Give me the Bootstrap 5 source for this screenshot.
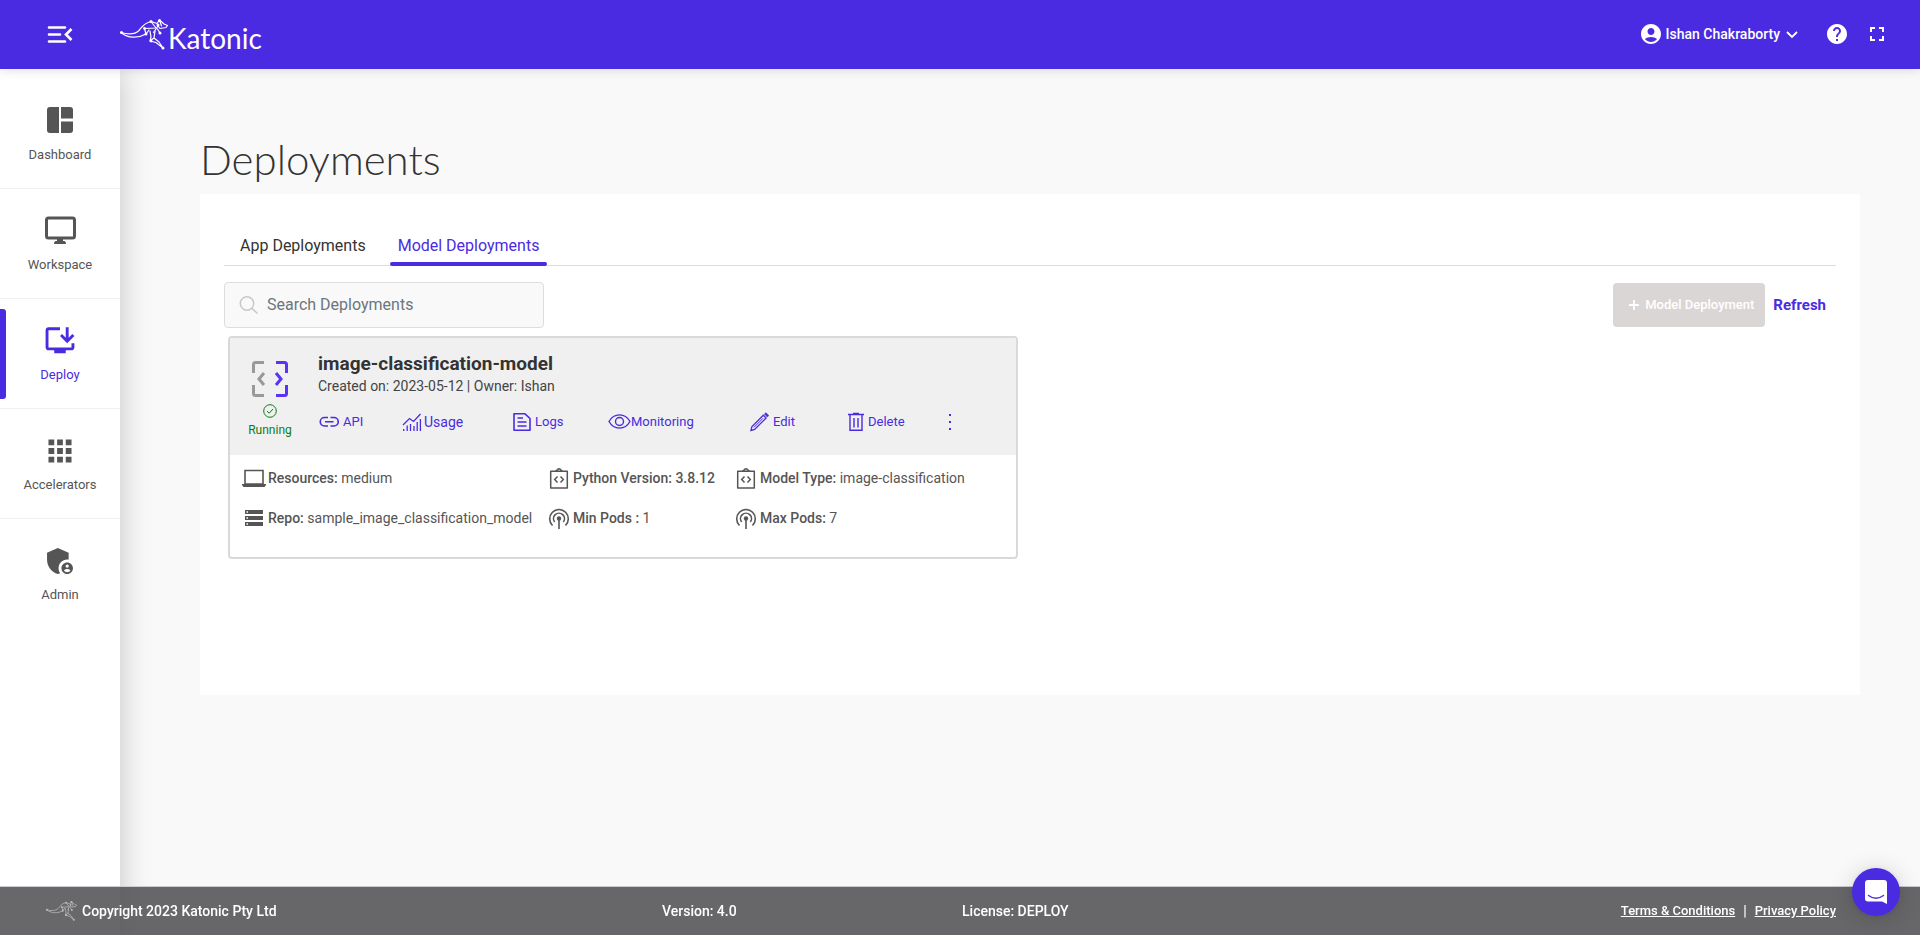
<!DOCTYPE html>
<html lang="en">
<head>
<meta charset="utf-8">
<meta name="viewport" content="width=device-width, initial-scale=1">
<title>Katonic - Deployments</title>
<link href="https://cdn.jsdelivr.net/npm/bootstrap@5.3.0/dist/css/bootstrap.min.css" rel="stylesheet">
<style>
:root { --brand: #4a2be2; --ink: #333; --soft: #555; }
body { font-family: Roboto, "Liberation Sans", sans-serif; font-size: 14px; line-height: 20px; color: var(--ink); background: #f9f9f9; }
svg { flex: none; display: block; }
button { font-family: inherit; }

.topbar { height: 69px; padding: 0 31px 2px 44px; background: var(--brand); box-shadow: 0 0 12px rgba(0,0,0,.15); z-index: 1020; }
.plain-btn { background: none; border: 0; padding: 0; color: inherit; }
.brand-link { margin-left: 44px; }
.wordmark { font-family: Lato, sans-serif; font-size: 28px; fill: #fff; }
.user-btn { font-size: 14px; font-weight: 500; gap: 3px; margin-right: 24px; }

.sidebar { width: 120px; background: #fff; box-shadow: 0 0 30px rgba(0,0,0,.22); padding-top: 10px; z-index: 1010; }
.side-link { height: 110px; padding-top: 24px; gap: 6px; font-size: 13px; color: var(--soft); border-bottom: 1px solid #f0f0f0; position: relative; }
.side-link:last-child { border-bottom: 0; }
.side-link.active { color: var(--brand); }
.side-link.active::before { content: ""; position: absolute; left: 0; top: 10px; bottom: 9px; width: 6px; border-radius: 0 3px 3px 0; background: var(--brand); }

.content-area { padding: 65px 60px 80px 80px; }
.page-title { font-family: Lato, sans-serif; font-weight: 300; font-size: 42px; line-height: 50px; margin: 0 0 10px; color: #333; }
.panel { background: #fff; padding: 36px 24px 24px; min-height: 501px; }
.tabs { border-bottom: 1px solid #ddd; gap: 16px; padding-left: 8px; height: 36px; }
.tabs .nav-link { position: relative; padding: 4px 8px; height: 36px; font-size: 16px; line-height: 24px; color: var(--ink); }
.tabs .nav-link.active { color: var(--brand); }
.tabs .nav-link.active::after { content: ""; position: absolute; left: 0; right: 0; bottom: 0; height: 4px; border-radius: 2px; background: var(--brand); }

.toolbar { margin-top: 16px; padding-right: 10px; }
.search-box { width: 320px; height: 46px; background: #f9f9f9; border: 1px solid #ddd; border-radius: 4px; padding: 0 14px; gap: 8px; }
.search-box input { background: none; border: 0; outline: 0; padding: 0; width: 100%; font-size: 16px; color: var(--ink); }
.search-box input::placeholder { color: #6c757d; opacity: 1; }
.add-btn { height: 44px; padding: 0 11px 0 15px; gap: 5px; font-size: 13px; font-weight: 500; color: #fff; background: #dad6d5; border: 0; border-radius: 4px; }
.refresh-btn { font-size: 15px; font-weight: 700; color: var(--brand); }

.model-col { padding: 8px 12px 0 4px; }
.model-card { border: 2px solid #d9d9d9; border-radius: 4px; background: #fff; }
.model-head { background: #f0f0f0; height: 117px; padding-top: 16px; }
.model-state { width: 80px; padding-top: 7px; gap: 7px; color: #0b7d17; font-size: 12px; line-height: 10px; }
.model-name { font-size: 19px; font-weight: 700; line-height: 20px; margin: 0 0 2px; }
.model-meta { font-size: 14px; line-height: 20px; color: #444; }
.actions { display: grid; grid-template-columns: 83fr 111fr 95fr 142fr 98fr 100fr 68fr; margin-top: 16px; padding-left: 1px; }
.actions a { color: var(--brand); font-size: 13px; height: 20px; }
.actions a.usage-link { font-size: 14px; gap: 2px; }
.facts { display: grid; grid-template-columns: 306fr 187fr 279fr; row-gap: 20px; padding: 13px 2px 29px 12px; color: var(--soft); }
.facts > div { height: 20px; gap: 2px; white-space: nowrap; }
.facts b { font-weight: 500; }
.facts svg { width: 24px; }
.facts .narrow { width: 22px; margin-right: 1px; }

.footer-bar { height: 49px; padding: 0 84px 0 45px; background: rgba(77,77,80,.85); border-top: 1px solid #ccc; background-clip: padding-box; color: #fff; font-weight: 500; display: grid; grid-template-columns: 617fr 300fr 874fr; align-items: center; }
.footer-bar a { color: #fff; font-size: 13px; }
.chat-btn { position: fixed; right: 20px; bottom: 19px; width: 48px; height: 48px; border: 0; border-radius: 50%; background: var(--brand); box-shadow: 0 2px 24px rgba(0,0,0,.16), 0 1px 6px rgba(0,0,0,.08); z-index: 1040; }
</style>
</head>
<body class="min-vh-100 d-flex flex-column">

<svg width="0" height="0" class="position-absolute" aria-hidden="true">
  <defs>
    <symbol id="kangaroo" viewBox="0 0 48 31">
      <g fill="none" stroke="currentColor" stroke-width="1.200" stroke-linejoin="round" stroke-linecap="round">
        <path d="M1 13.500C8 15.500 15 15.500 19 11.500C22 8 24 4 31 2.500L37 4.500L39.500 1L44 5L47.500 6.500L46 8.500L40 9.500L38 7L36 10L33.500 13.500"/>
        <path d="M1 13.500C8 19.500 18 19.500 26 15L24.500 9.500L36 9L31 2.500M26 15L29 11M39.500 1L41.500 7M37.500 10L40 14"/>
        <path d="M30 12L31 18L30 22L36 23.500L43 29M35 12L34 19L39 23L43 29M30 22L34 19"/>
      </g>
      <g fill="currentColor"><circle cx="1.500" cy="13.500" r="1.500"/><circle cx="31" cy="2.500" r="1.500"/><circle cx="39.500" cy="1.500" r="1.500"/><circle cx="24.500" cy="9.500" r="1.400"/><circle cx="26" cy="15" r="1.500"/><circle cx="38" cy="6" r="1.500"/><circle cx="40" cy="14" r="1.500"/><circle cx="43" cy="29" r="1.500"/><circle cx="31" cy="22" r="1.400"/></g>
    </symbol>
    <symbol id="clip-code" viewBox="0 0 22 24">
      <g fill="none" stroke="currentColor" stroke-width="1.500"><path d="M2.700 5.200H19.300V22H2.700Z" stroke-linejoin="round"/><path d="M8 5C8 4 9 4 9.500 4C9.500 2.300 12.500 2.300 12.500 4C13 4 14 4 14 5M9.500 10.500L6.700 13.500L9.500 16.500M12.500 10.500L15.300 13.500L12.500 16.500"/></g>
    </symbol>
    <symbol id="pod" viewBox="0 0 22 24">
      <g fill="none" stroke="currentColor" stroke-width="1.600"><path d="M4.500 19.500A9.300 9.300 0 1 1 17.500 19.500M6.600 16A5.500 5.500 0 1 1 15.400 16M11 13V23"/></g><circle cx="11" cy="12.500" r="2.200" fill="currentColor"/>
    </symbol>
  </defs>
</svg>

<header class="topbar sticky-top d-flex align-items-center text-white">
  <button class="plain-btn" type="button" aria-label="Collapse menu">
    <svg width="32" height="32" viewBox="0 0 32 32" fill="none" stroke="currentColor" stroke-width="2.600" stroke-linecap="round"><path d="M5 9.500H21M5 16.500H16M5 23.500H21"/><path d="M27.500 11L22 16.500L27.500 22" stroke-linecap="butt"/></svg>
  </button>
  <a class="brand-link" href="#" aria-label="Katonic home">
    <svg width="150" height="48" viewBox="0 0 150 48"><use href="#kangaroo" x="0" y="9" width="48" height="31" color="#fff"/><text class="wordmark" x="48" y="39">Katonic</text><circle cx="71" cy="32" r="1" fill="#fff"/></svg>
  </a>
  <div class="ms-auto d-flex align-items-center">
    <button class="plain-btn user-btn d-flex align-items-center" type="button">
      <svg width="24" height="24" viewBox="0 0 24 24" fill="currentColor"><path d="M12 2C6.480 2 2 6.480 2 12s4.480 10 10 10 10-4.480 10-10S17.520 2 12 2zm0 4c1.930 0 3.500 1.570 3.500 3.500S13.930 13 12 13s-3.500-1.570-3.500-3.500S10.070 6 12 6zm0 14c-2.030 0-4.430-.82-6.140-2.880C7.550 15.800 9.680 15 12 15s4.450.8 6.140 2.120C16.430 19.180 14.030 20 12 20z"/></svg>
      <span>Ishan Chakraborty</span>
      <svg width="18" height="18" viewBox="0 0 18 18" fill="none" stroke="currentColor" stroke-width="1.800"><path d="M4 7L9 12L14 7"/></svg>
    </button>
    <button class="plain-btn me-3" type="button" aria-label="Help">
      <svg width="24" height="24" viewBox="0 0 24 24" fill="currentColor"><path d="M12 2C6.480 2 2 6.480 2 12s4.480 10 10 10 10-4.480 10-10S17.520 2 12 2zm1 17h-2v-2h2v2zm2.070-7.750l-.9.920C13.450 12.900 13 13.500 13 15h-2v-.5c0-1.100.45-2.100 1.170-2.830l1.240-1.260c.37-.36.590-.86.590-1.410 0-1.100-.9-2-2-2s-2 .9-2 2H8c0-2.210 1.790-4 4-4s4 1.790 4 4c0 .880-.36 1.680-.93 2.250z"/></svg>
    </button>
    <button class="plain-btn" type="button" aria-label="Full screen">
      <svg width="24" height="24" viewBox="0 0 24 24" fill="currentColor"><path d="M7 14H5v5h5v-2H7v-3zm-2-4h2V7h3V5H5v5zm12 7h-3v2h5v-5h-2v3zM14 5v2h3v3h2V5h-5z"/></svg>
    </button>
  </div>
</header>

<div class="d-flex flex-grow-1">
  <nav class="sidebar flex-shrink-0" aria-label="Main">
    <a class="side-link d-flex flex-column align-items-center text-decoration-none" href="#">
      <svg width="36" height="36" viewBox="0 0 36 36" fill="currentColor"><path d="M8 4H17V30H8A3 3 0 0 1 5 27V7A3 3 0 0 1 8 4ZM19 4H28A3 3 0 0 1 31 7V15.500H19ZM19 18.500H31V27A3 3 0 0 1 28 30H19Z"/></svg>
      <span>Dashboard</span></a>
    <a class="side-link d-flex flex-column align-items-center text-decoration-none" href="#">
      <svg width="36" height="36" viewBox="0 0 36 36"><rect x="4.500" y="5" width="28" height="20" rx="2" fill="none" stroke="currentColor" stroke-width="3"/><path d="M15 25H21V28H22.500Q24 28.500 24 31H12Q12 28.500 13.500 28H15Z" fill="currentColor"/></svg>
      <span>Workspace</span></a>
    <a class="side-link active d-flex flex-column align-items-center text-decoration-none" href="#" aria-current="page">
      <svg width="36" height="36" viewBox="0 0 25 25" fill="currentColor"><path d="M20.500 17H4.500V5h8V3h-8c-1.100 0-2 .9-2 2v12c0 1.100.9 2 2 2h4v2h8v-2h4c1.100 0 2-.9 2-2v-3h-2zM17.500 14l5-5-1.410-1.410L18.500 10.170V3h-2v7.170l-2.590-2.580L12.500 9z"/></svg>
      <span>Deploy</span></a>
    <a class="side-link d-flex flex-column align-items-center text-decoration-none" href="#">
      <svg width="36" height="36" viewBox="0 0 25 25" fill="currentColor"><path d="M4.500 4.500h4v4h-4zM10.500 4.500h4v4h-4zM16.500 4.500h4v4h-4zM4.500 10.500h4v4h-4zM10.500 10.500h4v4h-4zM16.500 10.500h4v4h-4zM4.500 16.500h4v4h-4zM10.500 16.500h4v4h-4zM16.500 16.500h4v4h-4z"/></svg>
      <span>Accelerators</span></a>
    <a class="side-link d-flex flex-column align-items-center text-decoration-none" href="#">
      <svg width="36" height="36" viewBox="-.5 -.5 25 25" fill="currentColor"><path d="M17 11c.34 0 .67.040 1 .090V6.270L10.500 3 3 6.270v4.910c0 4.540 3.200 8.790 7.500 9.820.55-.13 1.080-.32 1.600-.55-.69-.98-1.100-2.170-1.100-3.450 0-3.310 2.690-6 6-6z"/><path d="M17 13c-2.210 0-4 1.790-4 4s1.790 4 4 4 4-1.790 4-4-1.790-4-4-4zm0 1.380c.62 0 1.120.51 1.120 1.120s-.51 1.120-1.120 1.120-1.120-.51-1.120-1.120.5-1.120 1.120-1.120zm0 5.370c-.93 0-1.740-.46-2.240-1.170.050-.72 1.510-1.080 2.240-1.080s2.190.36 2.240 1.080c-.5.710-1.310 1.170-2.240 1.170z"/></svg>
      <span>Admin</span></a>
  </nav>

  <main class="content-area flex-grow-1">
    <h1 class="page-title">Deployments</h1>
    <section class="panel">
      <ul class="tabs nav">
        <li class="nav-item"><a class="nav-link" href="#">App Deployments</a></li>
        <li class="nav-item"><a class="nav-link active" href="#" aria-current="true">Model Deployments</a></li>
      </ul>

      <div class="toolbar d-flex align-items-center justify-content-between">
        <label class="search-box d-flex align-items-center">
          <svg width="20" height="20" viewBox="0 0 20 20" fill="none" stroke="#c8c8c8" stroke-width="1.500"><circle cx="8" cy="8.500" r="6.700"/><path d="M13 13.500L18.500 18.500"/></svg>
          <input type="text" placeholder="Search Deployments" aria-label="Search Deployments">
        </label>
        <div class="d-flex align-items-center gap-2">
          <button class="add-btn d-flex align-items-center" type="button">
            <svg width="12" height="12" viewBox="0 0 12 12" fill="none" stroke="currentColor" stroke-width="1.800"><path d="M6 1V11M1 6H11"/></svg>
            <span>Model Deployment</span>
          </button>
          <button class="refresh-btn plain-btn" type="button">Refresh</button>
        </div>
      </div>

      <div class="row g-0">
        <div class="model-col col-lg-6">
          <article class="model-card">
            <div class="model-head d-flex">
              <div class="model-state d-flex flex-column align-items-center">
                <svg width="36" height="36" viewBox="0 0 36 36" fill="none" stroke-width="3"><path d="M1.500 12V3.500Q1.500 1.500 3.500 1.500H12M1.500 24V32.500Q1.500 34.500 3.500 34.500H12M12 12L7 18L12 24" stroke="#999"/><path d="M24 1.500H32.500Q34.500 1.500 34.500 3.500V12M34.500 24V32.500Q34.500 34.500 32.500 34.500H24M24 12L29 18L24 24" stroke="#5a33f5"/></svg>
                <svg width="14" height="14" viewBox="0 0 14 14" fill="none" stroke="currentColor"><circle cx="7" cy="7" r="6.300"/><path d="M4 7L6.200 9.200L10 5"/></svg>
                <span>Running</span>
              </div>
              <div class="flex-grow-1 ps-2">
                <h2 class="model-name">image-classification-model</h2>
                <div class="model-meta">Created on: 2023-05-12 | Owner: Ishan</div>
                <div class="actions">
                  <a class="d-flex align-items-center gap-1 text-decoration-none" href="#"><svg width="20" height="20" viewBox="0 0 20 20" fill="none" stroke="currentColor" stroke-width="1.600"><path d="M9 5.500H5.500A4.200 4.200 0 0 0 5.500 14H9M11.500 5.500H15A4.200 4.200 0 0 1 15 14H11.500M6 9.800H14.500"/></svg>API</a>
                  <a class="usage-link d-flex align-items-center text-decoration-none" href="#"><svg width="20" height="20" viewBox="0 0 20 20" fill="none" stroke="currentColor" stroke-width="1.300"><path d="M1 13L7.500 6.500L11.500 9.500L18.500 2M1.700 19V17M5.200 19V13.500M8.500 19V12M12 19V14M15.200 19V10M18.400 19V7"/></svg>Usage</a>
                  <a class="d-flex align-items-center gap-1 text-decoration-none" href="#"><svg width="18" height="20" viewBox="0 0 18 20" fill="none" stroke="currentColor" stroke-width="1.600"><path d="M1 1.800H12L17 6.500V18.200H1ZM4.500 6H10M4.500 10H13.500M4.500 14H13.500" stroke-linejoin="round"/></svg>Logs</a>
                  <a class="d-flex align-items-center text-decoration-none" href="#"><svg width="23" height="20" viewBox="0 0 23 20" fill="none" stroke="currentColor" stroke-width="1.400"><path d="M1 9.500C6 .7 17 .7 22 9.500C17 18.300 6 18.300 1 9.500Z"/><circle cx="11.500" cy="9.500" r="4"/></svg>Monitoring</a>
                  <a class="d-flex align-items-center gap-1 text-decoration-none" href="#"><svg width="19" height="20" viewBox="0 0 19 20" fill="none" stroke="currentColor" stroke-width="1.300"><path d="M1 18.500L1.800 14.700L13.300 3.200L16.100 6L4.600 17.500Z"/><path d="M4 15.300L13 6.300" stroke-width="1"/><path d="M14.500 2L16 .8L18.600 3.400L17.400 5Z" fill="currentColor" stroke-width=".8"/></svg>Edit</a>
                  <a class="d-flex align-items-center gap-1 text-decoration-none" href="#"><svg width="16" height="20" viewBox="0 0 16 20" fill="none" stroke="currentColor" stroke-width="1.400"><path d="M0 2.500H16M5 1.500H11M2 2.500V18.300H14V2.500M6 6V15.500M10 6V15.500"/></svg>Delete</a>
                  <a href="#" aria-label="More"><svg width="4" height="20" viewBox="0 0 4 20" fill="currentColor"><path d="M1 2h2v2H1zM1 9h2v2H1zM1 16h2v2H1z"/></svg></a>
                </div>
              </div>
            </div>
            <div class="facts">
              <div class="d-flex align-items-center"><svg height="20" viewBox="0 0 24 20"><path d="M3 2.500H21V16H3Z" fill="none" stroke="currentColor" stroke-width="1.600"/><path d="M0 16H24V17L22.500 19H1.500L0 17Z" fill="currentColor"/></svg><span><b>Resources:</b> medium</span></div>
              <div class="d-flex align-items-center"><svg class="narrow" height="24"><use href="#clip-code"/></svg><b>Python Version: 3.8.12</b></div>
              <div class="d-flex align-items-center"><svg class="narrow" height="24"><use href="#clip-code"/></svg><span><b>Model Type:</b> image-classification</span></div>
              <div class="d-flex align-items-center"><svg height="20" viewBox="0 0 24 20"><path d="M3 2H21V6H3ZM3 8H21V12H3ZM3 14H21V18H3Z" fill="currentColor"/><path d="M4.500 3.200h1.500v1.500H4.500zM4.500 9.200h1.500v1.500H4.500zM4.500 15.200h1.500v1.500H4.500z" fill="#fff"/></svg><span><b>Repo:</b> sample_image_classification_model</span></div>
              <div class="d-flex align-items-center"><svg class="narrow" height="24"><use href="#pod"/></svg><span><b>Min Pods :</b> 1</span></div>
              <div class="d-flex align-items-center"><svg class="narrow" height="24"><use href="#pod"/></svg><span><b>Max Pods:</b> 7</span></div>
            </div>
          </article>
        </div>
      </div>
    </section>
  </main>
</div>

<footer class="footer-bar fixed-bottom">
  <div class="d-flex align-items-center gap-1"><svg width="33" height="20" color="#bbb"><use href="#kangaroo"/></svg><span>Copyright 2023 Katonic Pty Ltd</span></div>
  <div>Version: 4.0</div>
  <div class="d-flex justify-content-between"><span>License: DEPLOY</span><span class="d-flex gap-2"><a href="#">Terms &amp; Conditions</a><span>|</span><a href="#">Privacy Policy</a></span></div>
</footer>
<button class="chat-btn d-flex align-items-center justify-content-center p-0" type="button" aria-label="Open chat">
  <svg width="22" height="24" viewBox="0 0 22 24"><path d="M3 0H19Q22 0 22 3V24L17 21.500H3Q0 21.500 0 18.500V3Q0 0 3 0Z" fill="#fff"/><path d="M3.500 15.500Q11 21 18.500 15.500" fill="none" stroke="#4a2be2" stroke-width="1.500" stroke-linecap="round"/></svg>
</button>
<script src="https://cdn.jsdelivr.net/npm/bootstrap@5.3.0/dist/js/bootstrap.bundle.min.js"></script>
</body>
</html>
